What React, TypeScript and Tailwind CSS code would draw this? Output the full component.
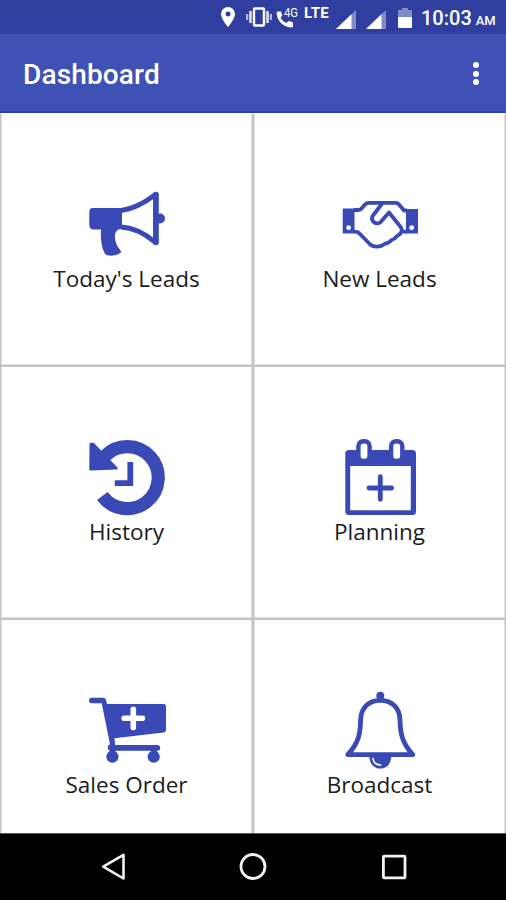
import type { ReactNode } from 'react';

interface TileProps {
  label: string;
  children: ReactNode;
}

function Tile({ label, children }: TileProps) {
  return (
    <button className="flex h-[253px] flex-col items-center border border-[#c4c4c4] bg-white pt-[72px] inset-shadow-[1px_0_0_#e0e0e0,-1px_0_0_#e0e0e0,0_-1px_0_#e0e0e0] nth-[-n+2]:border-t-white">
      <svg viewBox="0 0 76 76" className="size-[76px] shrink-0 overflow-visible text-[#3949b5]" fill="none" stroke="currentColor">
        {children}
      </svg>
      <span className="mt-[1px] text-[22.5px] leading-[32px] whitespace-nowrap text-[#1c1c1c]">{label}</span>
    </button>
  );
}

function Megaphone() {
  return (
    <>
      <path d="M4 22H33V43H31C27 44 25.5 48 26 52C26.5 58 29 61 32.5 66C28 70.5 17 71 15.5 67C12 60 11.5 52 12 43.5H4Q.3 43 .3 39V26Q.3 22 4 22Z" fill="currentColor" stroke="none" />
      <path d="M32 24.5C45 23 56 16.5 66.5 8.5V56.5C57 48.5 46 41.5 32 41" strokeWidth="4.8" strokeLinejoin="round" />
      <path d="M67 8.5V56.5" strokeWidth="5.6" strokeLinecap="round" />
      <circle cx="71" cy="32.5" r="5" fill="currentColor" stroke="none" />
    </>
  );
}

function Handshake() {
  return (
    <>
      <path d="M.7 22.5H12.5V47.5H.7ZM64 23H76V47.5H64Z" fill="currentColor" stroke="none" />
      <circle cx="6.6" cy="41.7" r="2.4" fill="white" stroke="none" />
      <circle cx="69.7" cy="41.7" r="2.4" fill="white" stroke="none" />
      <path
        d="M12 24H16.5Q18.5 24 20 22L23 18.5Q24.5 16.8 27 16.8H54Q55.5 16.8 57 18.5L62 24.5H65M40.5 17L31 29.5C28.5 33 31 37 35 37.4Q38 37.5 40 34.5L47 26.5L57.5 39.5Q61.5 44 58.5 47.5Q56 49.5 54.5 50.5Q52.5 53.5 49.5 54Q46.5 57.5 43.5 57.5Q39 60.8 35 60.7Q30.5 60.5 27.5 57.8L17.5 47.5Q16 45.7 12 45.7M59.5 45.7H65"
        strokeWidth="3.8"
        strokeLinejoin="round"
      />
    </>
  );
}

function History() {
  return (
    <>
      <path d="M13.3 57A31 31 0 1 0 16 17" strokeWidth="13.2" />
      <path d="M1.8 5H4L27.5 29.3L1.6 30.2Z" fill="currentColor" strokeWidth="2.6" strokeLinejoin="round" />
      <path d="M41.3 23V44.2H25.8" strokeWidth="5.8" />
    </>
  );
}

function Planning() {
  return (
    <>
      <path d="M7 11H70.5Q74 11 74 14.5V72.5Q74 76 70.5 76H7Q3.3 76 3.3 72.5V14.5Q3.3 11 7 11ZM8.2 27V71.2H68.8V27Z" fill="currentColor" fillRule="evenodd" stroke="none" />
      <rect x="16.4" y="2.2" width="11.2" height="19.8" rx="5" fill="white" strokeWidth="4.4" />
      <rect x="49.1" y="2.2" width="11.2" height="19.8" rx="5" fill="white" strokeWidth="4.4" />
      <path d="M27 49H49.6M38.3 37.7V60.3" strokeWidth="4.8" strokeLinecap="round" />
    </>
  );
}

function Cart() {
  return (
    <>
      <path d="M2.8 5.7H14.5Q16.5 5.7 17 8L18 12H74.5Q77 12 77 14.5V38Q77 40.3 74.5 40.6L25.5 46.3L26 53H69Q71.2 53.5 71.2 56T69 58.7H22Q18.5 58.5 18.7 55Q19 53 21 52.3L12.7 11.3H2.8Q0 11 0 8.5T2.8 5.7Z" fill="currentColor" stroke="none" />
      <path d="M20.5 57H26.5V60H20.5ZM62 57H68V60H62Z" fill="currentColor" stroke="none" />
      <circle cx="23.4" cy="64.7" r="6.1" fill="currentColor" stroke="none" />
      <circle cx="64.7" cy="64.7" r="6.1" fill="currentColor" stroke="none" />
      <path d="M35.2 26.3H53.4M44.3 17.2V35.4" stroke="white" strokeWidth="5.6" strokeLinecap="round" />
    </>
  );
}

function Bell() {
  return (
    <>
      <circle cx="38.3" cy="3.8" r="4" fill="currentColor" stroke="none" />
      <path d="M38.3 8.3C26 8.3 18.8 16.5 18.6 28C18.4 42 16.5 51 5.8 62.7H70.8C60.3 51 58.3 42 58 28C57.8 16.5 50.6 8.3 38.3 8.3Z" strokeWidth="4.8" strokeLinejoin="round" />
      <path d="M27.3 63.5H49.3C49.3 71.5 45 76.6 38.3 76.6S27.3 71.5 27.3 63.5Z" fill="currentColor" stroke="none" />
      <path d="M31 66.5C31.5 70.3 34 72.8 38.5 73.2" stroke="white" strokeWidth="1.7" strokeLinecap="round" />
    </>
  );
}

function SignalIcon() {
  return (
    <svg viewBox="0 0 20 19" className="mt-[4px] h-[19px] w-5 shrink-0" fill="white">
      <path d="M20 0V19H0Z" fillOpacity=".4" />
      <path d="M15.5 4.3V19H0Z" />
    </svg>
  );
}

function StatusBar() {
  return (
    <div className="flex h-[34px] shrink-0 items-center bg-[#303f9f] pr-[10px] pl-[221px] font-['Roboto',sans-serif] text-white">
      <svg viewBox="0 0 14 20" className="h-5 w-[14px] shrink-0" fill="white">
        <path fillRule="evenodd" d="M7 0A7 7 0 0 0 0 7C0 12 7 20 7 20S14 12 14 7A7 7 0 0 0 7 0ZM7 4.5A2.5 2.5 0 1 1 7 9.5A2.5 2.5 0 0 1 7 4.5Z" />
      </svg>
      <svg viewBox="0 0 26 20" className="ml-[11px] h-5 w-[26px] shrink-0" fill="none" stroke="white">
        <rect x="8" y="1.5" width="10" height="17" rx="1" strokeWidth="2.4" />
        <path d="M4.5 4V16M21.5 4V16" strokeWidth="2.6" strokeOpacity=".85" />
        <path d="M1.2 7V13M24.8 7V13" strokeWidth="2.2" strokeOpacity=".65" />
      </svg>
      <svg viewBox="0 0 23 22" className="ml-[4px] h-[22px] w-[23px] shrink-0" fill="white">
        <path d="M1.5 5.5H5L6.3 9.5L4.5 12Q7 15.8 10.3 17L13 14.8L17 16.5V20.5Q16.5 21.8 14 21.5Q2 19 .5 7.5Q.5 6 1.5 5.5Z" />
        <text x="8" y="11" fontSize="12" fontFamily="Roboto, sans-serif" textLength="14" lengthAdjust="spacingAndGlyphs">4G</text>
      </svg>
      <span className="mb-[8px] ml-[5px] w-[26px] text-[15px] leading-4 font-bold tracking-[0.2px]">LTE</span>
      <div className="ml-[6px] flex gap-[10px]">
        <SignalIcon />
        <SignalIcon />
      </div>
      <svg viewBox="0 0 14 20" className="mt-[1px] ml-[12px] h-5 w-[14px] shrink-0" fill="white">
        <path d="M4 0H10V2H14V9H0V2H4Z" fillOpacity=".4" />
        <path d="M0 9H14V19Q14 20 13 20H1Q0 20 0 19Z" />
      </svg>
      <span className="ml-[9px] flex items-baseline pt-[2px] font-medium whitespace-nowrap">
        <span className="text-[20px] leading-6">10:03</span>
        <span className="ml-[4px] text-[13px] leading-4">AM</span>
      </span>
    </div>
  );
}

function NavBar() {
  return (
    <div className="flex h-[67px] shrink-0 items-center justify-between border-t border-[#555] bg-black pr-[99px] pl-[101px]">
      <svg viewBox="0 0 24 28" className="h-7 w-6" fill="none" stroke="#f2f2f2" strokeWidth="2.6" strokeLinejoin="round">
        <path d="M2.2 13.7L22.5 1.9V25.5Z" />
      </svg>
      <svg viewBox="0 0 28 28" className="size-7" fill="none" stroke="#f2f2f2" strokeWidth="2.8">
        <circle cx="14" cy="13.5" r="12" />
      </svg>
      <svg viewBox="0 0 26 26" className="size-[26px]" fill="none" stroke="#f2f2f2" strokeWidth="2.8">
        <rect x="2.4" y="2.2" width="21.6" height="21.6" rx=".8" />
      </svg>
    </div>
  );
}

export default function App() {
  return (
    <div className="flex h-[900px] w-[506px] flex-col overflow-hidden bg-white">
      <StatusBar />
      <header className="flex h-[79px] shrink-0 items-center justify-between border-b-2 border-[#2545aa] bg-[#3f51b5] pr-[27px] pl-[23px]">
        <h1 className="pt-[5px] font-['Roboto',sans-serif] text-[28px] leading-8 font-medium tracking-[0.15px] text-white">Dashboard</h1>
        <button aria-label="More options" className="flex flex-col gap-[2.5px] pt-[2px]">
          <span className="size-[6px] rounded-full bg-white" />
          <span className="size-[6px] rounded-full bg-white" />
          <span className="size-[6px] rounded-full bg-white" />
        </button>
      </header>

      <main className="min-h-0 flex-1 overflow-hidden font-['Open_Sans','Noto_Sans',sans-serif]">
        <div className="grid grid-cols-2">
          <Tile label="Today's Leads"><Megaphone /></Tile>
          <Tile label="New Leads"><Handshake /></Tile>
          <Tile label="History"><History /></Tile>
          <Tile label="Planning"><Planning /></Tile>
          <Tile label="Sales Order"><Cart /></Tile>
          <Tile label="Broadcast"><Bell /></Tile>
        </div>
      </main>

      <NavBar />
    </div>
  );
}
